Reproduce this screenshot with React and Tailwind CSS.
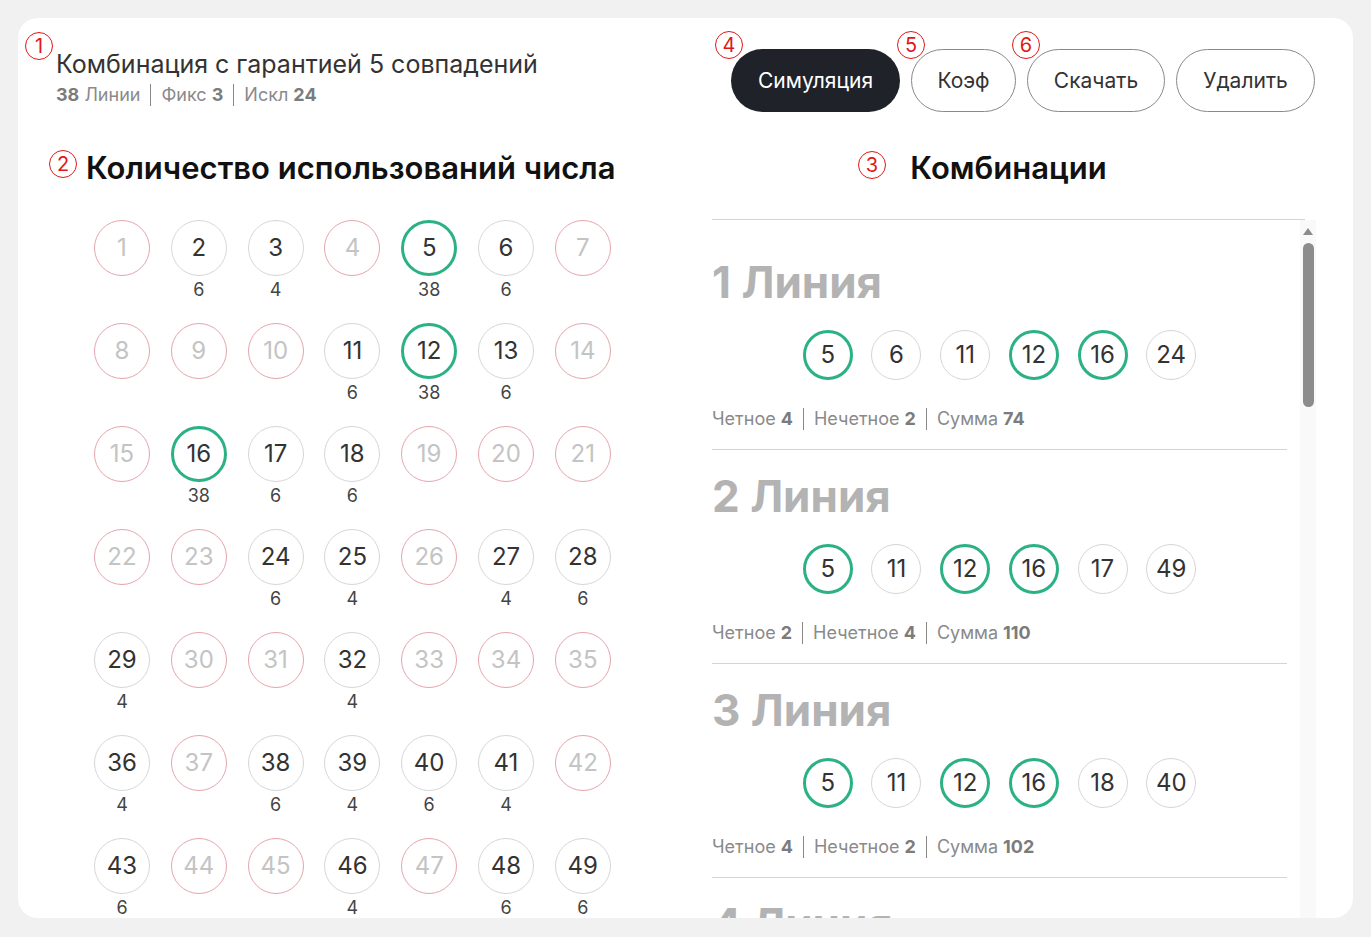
import React from "react";

const grid = [
  [1, null], [2, 6], [3, 4], [4, null], [5, 38], [6, 6], [7, null],
  [8, null], [9, null], [10, null], [11, 6], [12, 38], [13, 6], [14, null],
  [15, null], [16, 38], [17, 6], [18, 6], [19, null], [20, null], [21, null],
  [22, null], [23, null], [24, 6], [25, 4], [26, null], [27, 4], [28, 6],
  [29, 4], [30, null], [31, null], [32, 4], [33, null], [34, null], [35, null],
  [36, 4], [37, null], [38, 6], [39, 4], [40, 6], [41, 4], [42, null],
  [43, 6], [44, null], [45, null], [46, 4], [47, null], [48, 6], [49, 6],
];

const lines = [
  { n: 1, nums: [5, 6, 11, 12, 16, 24], even: 4, odd: 2, sum: 74 },
  { n: 2, nums: [5, 11, 12, 16, 17, 49], even: 2, odd: 4, sum: 110 },
  { n: 3, nums: [5, 11, 12, 16, 18, 40], even: 4, odd: 2, sum: 102 },
  { n: 4, nums: [5, 11, 12, 16, 24, 28], even: 4, odd: 2, sum: 96 },
];

const fixed = [5, 12, 16];

function Mark({ n, className }) {
  return (
    <div
      className={
        "absolute flex h-[28px] w-[28px] items-center justify-center rounded-full border border-[#e01818] text-[20px] leading-none text-[#e01818] " +
        className
      }
    >
      {n}
    </div>
  );
}

function Sep() {
  return <span className="mx-[10px] inline-block h-[22px] w-px bg-[#888]" />;
}

function GridCell({ num, count }) {
  const red = count === null;
  const green = count === 38;
  let cls = "border border-[#d6d6d6] text-[#333]";
  if (red) cls = "border border-[#e5a4ac] text-[#c4c4c4]";
  if (green) cls = "border-[3px] border-[#2bb184] text-[#333]";
  return (
    <div className="flex w-[56px] flex-col items-center">
      <div className={"flex h-[56px] w-[56px] items-center justify-center rounded-full text-[24px] " + cls}>
        {num}
      </div>
      <div className="mt-[4px] h-[20px] text-[18px] leading-[20px] text-[#444]">{count ?? ""}</div>
    </div>
  );
}

function LineItem({ line, first }) {
  return (
    <div className={"border-b border-[#d4d4d4] pb-[19px] " + (first ? "pt-[36px]" : "pt-[20px]")}>
      <div className="text-[44px] font-bold leading-[52px] text-[#b3b3b3]">{line.n} Линия</div>
      <div className="mt-[22px] flex justify-center gap-[18.7px]">
        {line.nums.map((x) => (
          <div
            key={x}
            className={
              "flex h-[50px] w-[50px] items-center justify-center rounded-full text-[24px] text-[#333] " +
              (fixed.includes(x) ? "border-[3px] border-[#2bb184]" : "border border-[#d6d6d6]")
            }
          >
            {x}
          </div>
        ))}
      </div>
      <div className="mt-[28px] flex h-[22px] items-center text-[18px] leading-[22px] text-[#8a8a8a]">
        <span>Четное <b className="font-bold text-[#7c7c7c]">{line.even}</b></span>
        <Sep />
        <span>Нечетное <b className="font-bold text-[#7c7c7c]">{line.odd}</b></span>
        <Sep />
        <span>Сумма <b className="font-bold text-[#7c7c7c]">{line.sum}</b></span>
      </div>
    </div>
  );
}

export default function App() {
  return (
    <div
      className="min-h-[937px] w-full bg-[#f1f1f1] pl-[18px] pt-[18px]"
      style={{ fontFamily: "Inter, 'Noto Sans', sans-serif" }}
    >
      <div className="relative flex h-[900px] w-[1335px] overflow-hidden rounded-[20px] bg-white pt-[31px]">
        <Mark n={1} className="left-[7px] top-[14px]" />
        <Mark n={2} className="left-[31px] top-[132px]" />
        <Mark n={3} className="left-[840px] top-[133px]" />
        <Mark n={4} className="left-[697px] top-[13px] z-10" />
        <Mark n={5} className="left-[879px] top-[13px] z-10" />
        <Mark n={6} className="left-[994px] top-[13px] z-10" />

        {/* Left column */}
        <div className="w-[694px] shrink-0 pl-[38px] pt-px">
          <div className="text-[25px] leading-[28px] text-[#333]">Комбинация с гарантией 5 совпадений</div>
          <div className="mt-[6px] flex items-center text-[18px] leading-[22px] text-[#8a8a8a]">
            <span><b className="font-bold text-[#7c7c7c]">38</b> Линии</span>
            <Sep />
            <span>Фикс <b className="font-bold text-[#7c7c7c]">3</b></span>
            <Sep />
            <span>Искл <b className="font-bold text-[#7c7c7c]">24</b></span>
          </div>
          <div className="ml-[30px] mt-[42px] text-[31px] font-semibold leading-[40px] text-[#111]">
            Количество использований числа
          </div>
          <div className="ml-[38px] mt-[32px] grid grid-cols-[repeat(7,56px)] gap-x-[20.8px] gap-y-[23px]">
            {grid.map(([n, c]) => (
              <GridCell key={n} num={n} count={c} />
            ))}
          </div>
        </div>

        {/* Right column */}
        <div className="flex w-[604px] shrink-0 flex-col">
          <div className="flex justify-end gap-[11px] pr-px">
            <button className="h-[63px] w-[169px] rounded-full bg-[#1f2229] text-[21px] text-white">Симуляция</button>
            <button className="h-[63px] w-[105px] rounded-full border border-[#888] text-[21px] text-[#333]">Коэф</button>
            <button className="h-[63px] w-[138px] rounded-full border border-[#888] text-[21px] text-[#333]">Скачать</button>
            <button className="h-[63px] w-[139px] rounded-full border border-[#888] text-[21px] text-[#333]">Удалить</button>
          </div>
          <div className="mt-[36px] w-[593px] text-center text-[31px] font-semibold leading-[40px] text-[#111]">
            Комбинации
          </div>
          <div className="mt-[31px] w-[593px] border-t border-[#d4d4d4]" />
          <div className="flex flex-1">
            <div className="w-[575px]">
              {lines.map((l, i) => (
                <LineItem key={l.n} line={l} first={i === 0} />
              ))}
            </div>
            <div className="ml-[13px] flex w-[16px] flex-col items-center bg-[#f9f9f9] pt-[8px]">
              <div className="h-0 w-0 border-x-[5px] border-b-[7px] border-x-transparent border-b-[#8c8c8c]" />
              <div className="mt-[8px] h-[164px] w-[11px] rounded-full bg-[#8c8c8c]" />
            </div>
          </div>
        </div>
      </div>
    </div>
  );
}
